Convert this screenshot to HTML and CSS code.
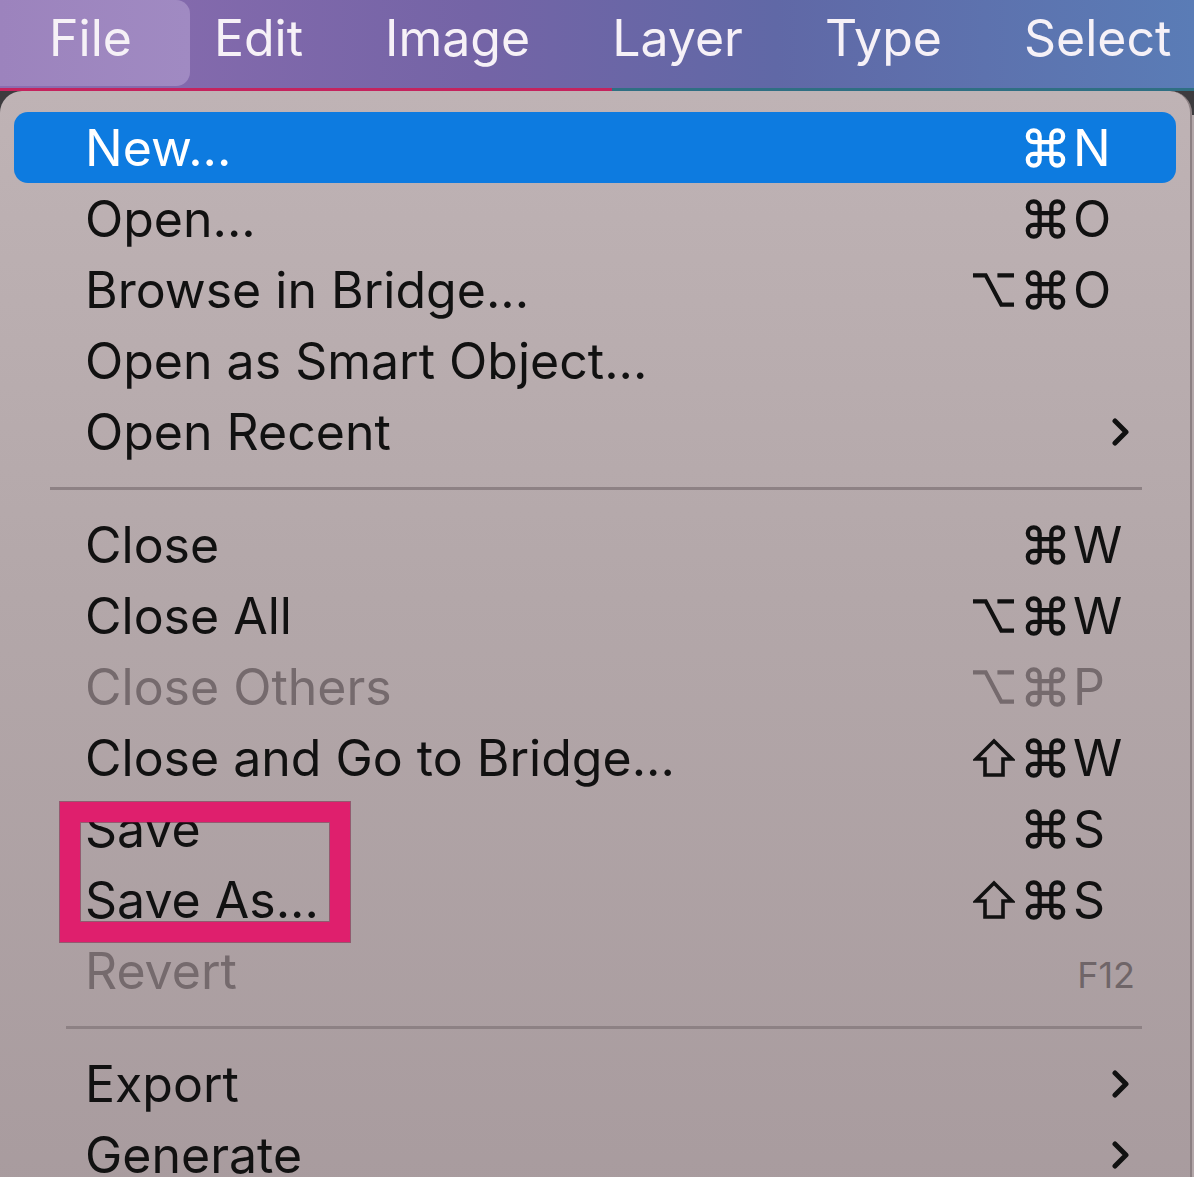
FILE: index.html
```html
<!DOCTYPE html>
<html lang="en">
<head>
    <meta charset="UTF-8">
    <meta name="viewport" content="width=device-width, initial-scale=1.0">
    <title>File Menu</title>
    <link rel="stylesheet" href="styles.css">
</head>
<body>
<div class="screen">

    <!-- Top menu bar -->
    <nav class="menubar">
        <span class="menubar-item active">File</span>
        <span class="menubar-item">Edit</span>
        <span class="menubar-item">Image</span>
        <span class="menubar-item">Layer</span>
        <span class="menubar-item">Type</span>
        <span class="menubar-item">Select</span>
    </nav>
    <div class="menubar-edge"></div>

    <!-- File dropdown -->
    <div class="menu-wrap">
        <div class="menu">
            <div class="menu-item selected">
                <span class="label">New...</span>
                <span class="mods">
                    <svg class="icon-cmd" width="41" height="40" viewBox="1.8 1.8 20.4 20.4"><path d="M15 6v12a3 3 0 1 0 3-3H6a3 3 0 1 0 3 3V6a3 3 0 1 0-3 3h12a3 3 0 1 0-3-3"/></svg>
                </span>
                <span class="key">N</span>
            </div>
            <div class="menu-item">
                <span class="label">Open...</span>
                <span class="mods">
                    <svg class="icon-cmd" width="41" height="40" viewBox="1.8 1.8 20.4 20.4"><path d="M15 6v12a3 3 0 1 0 3-3H6a3 3 0 1 0 3 3V6a3 3 0 1 0-3 3h12a3 3 0 1 0-3-3"/></svg>
                </span>
                <span class="key">O</span>
            </div>
            <div class="menu-item">
                <span class="label">Browse in Bridge...</span>
                <span class="mods">
                    <svg class="icon-opt" width="43" height="38" viewBox="0 0 44 38"><path d="M1 4 H14 L30 34 H43 M26 4 H43"/></svg>
                    <svg class="icon-cmd" width="41" height="40" viewBox="1.8 1.8 20.4 20.4"><path d="M15 6v12a3 3 0 1 0 3-3H6a3 3 0 1 0 3 3V6a3 3 0 1 0-3 3h12a3 3 0 1 0-3-3"/></svg>
                </span>
                <span class="key">O</span>
            </div>
            <div class="menu-item">
                <span class="label">Open as Smart Object...</span>
            </div>
            <div class="menu-item">
                <span class="label">Open Recent</span>
                <svg class="chevron" width="18" height="30" viewBox="0 0 18 30"><path d="M3 4 L14 15 L3 26"/></svg>
            </div>

            <div class="separator"></div>

            <div class="menu-item">
                <span class="label">Close</span>
                <span class="mods">
                    <svg class="icon-cmd" width="41" height="40" viewBox="1.8 1.8 20.4 20.4"><path d="M15 6v12a3 3 0 1 0 3-3H6a3 3 0 1 0 3 3V6a3 3 0 1 0-3 3h12a3 3 0 1 0-3-3"/></svg>
                </span>
                <span class="key">W</span>
            </div>
            <div class="menu-item">
                <span class="label">Close All</span>
                <span class="mods">
                    <svg class="icon-opt" width="43" height="38" viewBox="0 0 44 38"><path d="M1 4 H14 L30 34 H43 M26 4 H43"/></svg>
                    <svg class="icon-cmd" width="41" height="40" viewBox="1.8 1.8 20.4 20.4"><path d="M15 6v12a3 3 0 1 0 3-3H6a3 3 0 1 0 3 3V6a3 3 0 1 0-3 3h12a3 3 0 1 0-3-3"/></svg>
                </span>
                <span class="key">W</span>
            </div>
            <div class="menu-item disabled">
                <span class="label">Close Others</span>
                <span class="mods">
                    <svg class="icon-opt" width="43" height="38" viewBox="0 0 44 38"><path d="M1 4 H14 L30 34 H43 M26 4 H43"/></svg>
                    <svg class="icon-cmd" width="41" height="40" viewBox="1.8 1.8 20.4 20.4"><path d="M15 6v12a3 3 0 1 0 3-3H6a3 3 0 1 0 3 3V6a3 3 0 1 0-3 3h12a3 3 0 1 0-3-3"/></svg>
                </span>
                <span class="key">P</span>
            </div>
            <div class="menu-item">
                <span class="label">Close and Go to Bridge...</span>
                <span class="mods">
                    <svg class="icon-shift" width="42" height="40" viewBox="0 0 42 40"><path d="M21 3 L39 21 H30 V37 H12 V21 H3 Z"/></svg>
                    <svg class="icon-cmd" width="41" height="40" viewBox="1.8 1.8 20.4 20.4"><path d="M15 6v12a3 3 0 1 0 3-3H6a3 3 0 1 0 3 3V6a3 3 0 1 0-3 3h12a3 3 0 1 0-3-3"/></svg>
                </span>
                <span class="key">W</span>
            </div>
            <div class="menu-item">
                <span class="label">Save</span>
                <span class="mods">
                    <svg class="icon-cmd" width="41" height="40" viewBox="1.8 1.8 20.4 20.4"><path d="M15 6v12a3 3 0 1 0 3-3H6a3 3 0 1 0 3 3V6a3 3 0 1 0-3 3h12a3 3 0 1 0-3-3"/></svg>
                </span>
                <span class="key">S</span>
            </div>
            <div class="menu-item">
                <span class="label">Save As...</span>
                <span class="mods">
                    <svg class="icon-shift" width="42" height="40" viewBox="0 0 42 40"><path d="M21 3 L39 21 H30 V37 H12 V21 H3 Z"/></svg>
                    <svg class="icon-cmd" width="41" height="40" viewBox="1.8 1.8 20.4 20.4"><path d="M15 6v12a3 3 0 1 0 3-3H6a3 3 0 1 0 3 3V6a3 3 0 1 0-3 3h12a3 3 0 1 0-3-3"/></svg>
                </span>
                <span class="key">S</span>
            </div>
            <div class="menu-item disabled">
                <span class="label">Revert</span>
                <span class="fkey">F12</span>
            </div>

            <div class="separator inset"></div>

            <div class="menu-item">
                <span class="label">Export</span>
                <svg class="chevron" width="18" height="30" viewBox="0 0 18 30"><path d="M3 4 L14 15 L3 26"/></svg>
            </div>
            <div class="menu-item">
                <span class="label">Generate</span>
                <svg class="chevron" width="18" height="30" viewBox="0 0 18 30"><path d="M3 4 L14 15 L3 26"/></svg>
            </div>
        </div>
    </div>

    <!-- Pink annotation around Save / Save As -->
    <div class="annotation"></div>
</div>
</body>
</html>
```

FILE: styles.css
```css
/* Page */
body {
    margin: 0;
    padding: 0;
    background: #ab9fa1;
    font-family: 'Inter', 'Liberation Sans', sans-serif;
    overflow: hidden;
}

.screen {
    position: relative;
    width: 1194px;
    height: 1177px;
    overflow: hidden;
}

/* Menu bar */
.menubar {
    display: flex;
    align-items: flex-start;
    height: 88px;
    background: linear-gradient(to right, #8c6db0 0%, #7464a6 40%, #6068a6 65%, #5a7cb6 100%);
}

.menubar-item {
    display: flex;
    align-items: center;
    height: 76px;
    padding: 0 41px 10px;
    font-size: 50px;
    color: #f6f1f7;
}

.menubar-item.active {
    padding: 0 58px 10px 49px;
    background: linear-gradient(to right, #9c83bd, #a08ac2);
    border-radius: 0 14px 14px 0;
}

.menubar-item.active + .menubar-item {
    padding-left: 24px;
}

.menubar-edge {
    height: 3px;
    background: linear-gradient(to right, #c4235e 0, #c4235e 612px, #2f6f83 612px, #2f6f83 100%);
}

/* Dropdown */
.menu-wrap {
    background: linear-gradient(to bottom, #3d3b3e 0, #3d3b3e 24px, #b4a8aa 24px);
}

.menu {
    width: 1174px;
    margin-right: 4px;
    padding: 21px 14px 0 2px;
    background: linear-gradient(to bottom, #bfb3b5 0%, #b3a7a9 45%, #a89b9e 100%);
    border-radius: 22px 22px 0 0;
    border-right: 2px solid #8c8083;
    height: 1100px;
}

.menu-item {
    display: flex;
    align-items: center;
    height: 71px;
    margin-left: 12px;
    padding: 0 46px 0 71px;
    border-radius: 14px;
    font-size: 50px;
    color: #111;
}

.menu-item .label {
    flex: 1;
}

.menu-item.selected {
    background: #0d7be0;
    color: #fff;
}

.menu-item.disabled {
    color: #756a6d;
}

/* Modifier key symbols */
.mods {
    display: flex;
    align-items: center;
    gap: 10px;
}

.mods svg {
    display: block;
    fill: none;
    stroke: currentColor;
}

.icon-cmd {
    stroke-width: 2.2;
}

.icon-opt {
    stroke-width: 4.2;
}

.icon-shift {
    stroke-width: 3.6;
    stroke-linejoin: miter;
}

.key {
    width: 57px;
    padding-left: 7px;
}

.fkey {
    font-size: 36px;
    color: #6f6568;
    margin-right: -5px;
    padding-top: 8px;
}

.chevron {
    display: block;
    fill: none;
    stroke: currentColor;
    stroke-width: 5;
    stroke-linecap: round;
    stroke-linejoin: round;
}

.separator {
    height: 3px;
    margin: 20px 34px 19px 48px;
    background: #8d8184;
}

.separator.inset {
    margin-left: 64px;
}

/* Highlight box drawn over the Save items */
.annotation {
    position: absolute;
    left: 60px;
    top: 802px;
    width: 250px;
    height: 100px;
    border: 20px solid #df1f6d;
    box-shadow: 0 0 0 1px rgba(120, 20, 60, 0.5), inset 0 0 0 1px rgba(120, 20, 60, 0.5);
}
```
